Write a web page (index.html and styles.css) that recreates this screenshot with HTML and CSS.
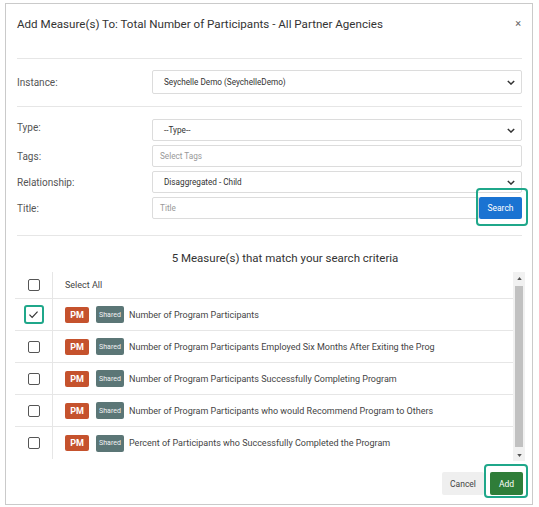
FILE: index.html
```html
<!DOCTYPE html>
<html>
<head>
<meta charset="utf-8">
<link rel="stylesheet" href="styles.css">
</head>
<body>
<div class="modal">
  <div class="m-header">
    <div class="m-title">Add Measure(s) To: Total Number of Participants - All Partner Agencies</div>
    <div class="m-close">×</div>
  </div>
  <div class="sec sec-instance">
    <div class="frow">
      <div class="flabel">Instance:</div>
      <div class="field select tall">Seychelle Demo (SeychelleDemo)<svg class="chev" viewBox="0 0 10 6"><path d="M1 1l4 4 4-4" fill="none" stroke="#333" stroke-width="1.8"/></svg></div>
    </div>
  </div>
  <div class="sec sec-filters">
    <div class="frow">
      <div class="flabel lab-up">Type:</div>
      <div class="field select">--Type--<svg class="chev" viewBox="0 0 10 6"><path d="M1 1l4 4 4-4" fill="none" stroke="#333" stroke-width="1.8"/></svg></div>
    </div>
    <div class="frow">
      <div class="flabel">Tags:</div>
      <div class="field ph">Select Tags</div>
    </div>
    <div class="frow">
      <div class="flabel">Relationship:</div>
      <div class="field select">Disaggregated - Child<svg class="chev" viewBox="0 0 10 6"><path d="M1 1l4 4 4-4" fill="none" stroke="#333" stroke-width="1.8"/></svg></div>
    </div>
    <div class="frow">
      <div class="flabel">Title:</div>
      <div class="igroup">
        <div class="field ph grow">Title</div>
        <div class="hl hl-search"><div class="btn btn-blue">Search</div></div>
      </div>
    </div>
  </div>
  <div class="results-head">5 Measure(s) that match your search criteria</div>
  <div class="tablebox">
    <div class="tbl">
      <div class="tr thead">
        <div class="tc"><span class="cb"></span></div>
        <div class="td">Select All</div>
      </div>
      <div class="tr">
        <div class="tc"><span class="cb cb-on"><svg viewBox="0 0 12 10"><path d="M1.5 5.2l3 3 6-6.5" fill="none" stroke="#333" stroke-width="1.3"/></svg></span></div>
        <div class="td"><span class="pm">PM</span><span class="sh">Shared</span>Number of Program Participants</div>
      </div>
      <div class="tr">
        <div class="tc"><span class="cb"></span></div>
        <div class="td"><span class="pm">PM</span><span class="sh">Shared</span>Number of Program Participants Employed Six Months After Exiting the Prog</div>
      </div>
      <div class="tr">
        <div class="tc"><span class="cb"></span></div>
        <div class="td"><span class="pm">PM</span><span class="sh">Shared</span>Number of Program Participants Successfully Completing Program</div>
      </div>
      <div class="tr">
        <div class="tc"><span class="cb"></span></div>
        <div class="td"><span class="pm">PM</span><span class="sh">Shared</span>Number of Program Participants who would Recommend Program to Others</div>
      </div>
      <div class="tr last">
        <div class="tc"><span class="cb"></span></div>
        <div class="td"><span class="pm">PM</span><span class="sh">Shared</span>Percent of Participants who Successfully Completed the Program</div>
      </div>
    </div>
    <div class="sbar">
      <svg class="arr" viewBox="0 0 6 4"><path d="M0 4L3 0L6 4Z" fill="#555"/></svg>
      <div class="thumb"></div>
      <svg class="arr" viewBox="0 0 6 4"><path d="M0 0L3 4L6 0Z" fill="#555"/></svg>
    </div>
  </div>
  <div class="m-footer">
    <div class="btn btn-gray">Cancel</div>
    <div class="hl hl-add"><div class="btn btn-green">Add</div></div>
  </div>
</div>
</body>
</html>
```
FILE: styles.css
```css
* { box-sizing: border-box; }
html, body { margin: 0; padding: 0; background: #fff; }
body { font-family: Roboto, "Liberation Sans", Arial, sans-serif; color: #333; }

.modal {
  margin: 3px 0 0 5px;
  width: 528px;
  height: 502px;
  border: 1px solid #cacaca;
  padding: 0 10px 0 11px;
  display: flex;
  flex-direction: column;
}

.m-header {
  height: 55px;
  padding-top: 12px;
  border-bottom: 1px solid #e6e6e6;
  display: flex;
  justify-content: space-between;
  align-items: flex-start;
}
.m-title { font-size: 11.6px; line-height: 16px; color: #333; }
.m-close { font-size: 11px; line-height: 12px; color: #666; margin-right: 1px; margin-top: 2px; }

.sec { border-bottom: 1px solid #e6e6e6; }
.sec-instance { padding: 11px 0 12px; }
.sec-filters { padding: 12px 0 16px; display: flex; flex-direction: column; gap: 4px; }

.frow { display: flex; align-items: center; }
.flabel { width: 135px; font-size: 10px; color: #555; }
.lab-up { margin-top: -5px; }

.field {
  flex: 1;
  height: 22px;
  border: 1px solid #dcdcdc;
  border-radius: 2px;
  font-size: 8.2px;
  color: #333;
  display: flex;
  align-items: center;
  padding-left: 11px;
  background: #fff;
}
.field.tall { height: 24px; }
.field.select { justify-content: space-between; padding-right: 6px; }
.field.ph { color: #999; padding-left: 7px; }
.chev { width: 8px; height: 5px; }

.igroup { flex: 1; display: flex; }
.field.grow { border-radius: 2px 0 0 2px; }

.btn {
  height: 22px;
  display: flex;
  align-items: center;
  justify-content: center;
  font-size: 8.5px;
  border-radius: 2px;
}
.btn-blue { width: 43px; background: #1a73d2; color: #fff; }
.btn-gray { width: 42px; height: 23px; background: #efefef; color: #444; margin-right: 6px; }
.btn-green { width: 33px; height: 23px; background: #2f7d39; color: #fff; }

.hl { position: relative; }
.hl::after {
  content: "";
  position: absolute;
  border: 2px solid #1fa78a;
  border-radius: 4px;
}
.hl-search::after { top: -9px; bottom: -7px; left: -3px; right: -6px; }
.hl-add::after { top: -8px; bottom: -3px; left: -6px; right: -5px; }

.results-head {
  height: 36px;
  padding-top: 15px;
  padding-left: 31px;
  font-size: 11.5px;
  line-height: 14px;
  text-align: center;
  color: #333;
}

.tablebox {
  height: 189px;
  margin: 0 -3px 0 -2px;
  display: flex;
}
.tbl { flex: 1; }
.tr { display: flex; height: 32px; border-bottom: 1px solid #e6e6e6; }
.tr.thead { height: 27px; }
.tr.last { border-bottom: none; }
.tc {
  width: 38px;
  border-right: 1px solid #e6e6e6;
  display: flex;
  align-items: center;
  justify-content: center;
}
.td {
  flex: 1;
  display: flex;
  align-items: center;
  padding-left: 12px;
  font-size: 9px;
  color: #444;
  white-space: nowrap;
}
.cb {
  width: 12px;
  height: 12px;
  border: 1.5px solid #555;
  border-radius: 2px;
  display: flex;
  align-items: center;
  justify-content: center;
}
.cb-on {
  width: 20px;
  height: 19px;
  border: 2px solid #1fa78a;
  border-radius: 3px;
}
.cb-on svg { width: 11px; height: 9px; }

.pm {
  width: 24px;
  height: 16px;
  background: #c5522d;
  color: #fff;
  font-weight: bold;
  font-size: 9px;
  border-radius: 2px;
  display: inline-flex;
  align-items: center;
  justify-content: center;
  margin-right: 7px;
}
.sh {
  width: 28px;
  height: 17px;
  background: #5b7676;
  color: #f2f2f2;
  font-size: 7px;
  border-radius: 2px;
  display: inline-flex;
  align-items: center;
  justify-content: center;
  margin-right: 5px;
}

.sbar {
  width: 12px;
  background: #f1f1f1;
  display: flex;
  flex-direction: column;
  align-items: center;
  padding: 5px 0 4px;
}
.arr { width: 5px; height: 3px; }
.thumb { width: 8px; flex: 1; background: #c1c1c1; margin: 6px 0 7px; }

.m-footer {
  padding-top: 11px;
  display: flex;
  justify-content: flex-end;
  margin-right: -1px;
}
```
